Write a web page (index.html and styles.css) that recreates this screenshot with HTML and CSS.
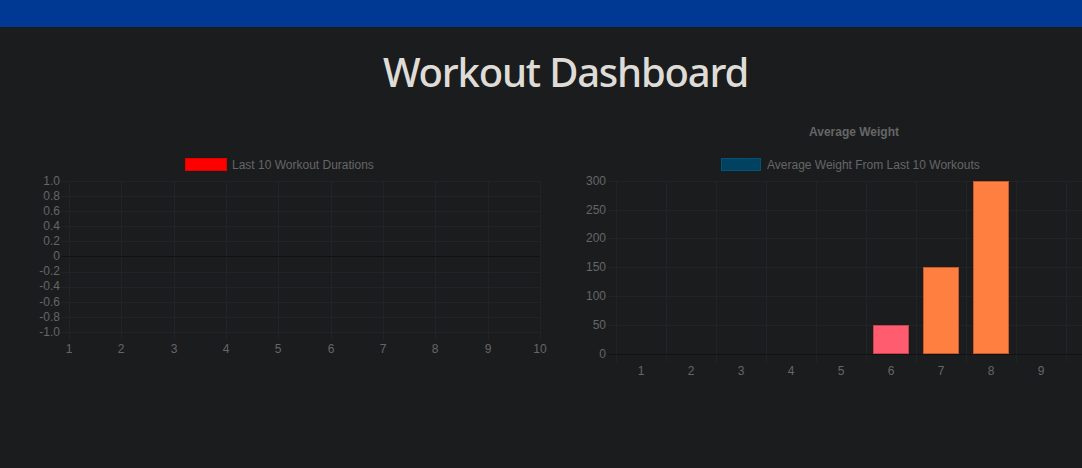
FILE: index.html
```html
<!DOCTYPE html>
<html lang="en">
<head>
<meta charset="utf-8">
<title>Workout Dashboard</title>
<link rel="stylesheet" href="styles.css">
</head>
<body>
<header class="topbar"></header>
<main class="page">
  <h1 class="title">Workout Dashboard</h1>
  <section class="charts">
    <div class="chart">
      <svg class="chart-svg" width="542" height="268" viewBox="0 0 542 268">
        <rect x="177.5" y="46.5" width="41" height="12" fill="#ff0000" stroke="#e00000"/>
        <text class="legend" x="224" y="57">Last 10 Workout Durations</text>
        <g class="grid">
          <line x1="53" y1="69.5" x2="532" y2="69.5"/>
          <line x1="53" y1="84.5" x2="532" y2="84.5"/>
          <line x1="53" y1="99.5" x2="532" y2="99.5"/>
          <line x1="53" y1="114.5" x2="532" y2="114.5"/>
          <line x1="53" y1="129.5" x2="532" y2="129.5"/>
          <line x1="53" y1="160.5" x2="532" y2="160.5"/>
          <line x1="53" y1="175.5" x2="532" y2="175.5"/>
          <line x1="53" y1="190.5" x2="532" y2="190.5"/>
          <line x1="53" y1="205.5" x2="532" y2="205.5"/>
          <line x1="53" y1="220.5" x2="532" y2="220.5"/>
          <line x1="61.5" y1="69" x2="61.5" y2="228"/>
          <line x1="113.5" y1="69" x2="113.5" y2="228"/>
          <line x1="166.5" y1="69" x2="166.5" y2="228"/>
          <line x1="218.5" y1="69" x2="218.5" y2="228"/>
          <line x1="270.5" y1="69" x2="270.5" y2="228"/>
          <line x1="323.5" y1="69" x2="323.5" y2="228"/>
          <line x1="375.5" y1="69" x2="375.5" y2="228"/>
          <line x1="427.5" y1="69" x2="427.5" y2="228"/>
          <line x1="480.5" y1="69" x2="480.5" y2="228"/>
          <line x1="532.5" y1="69" x2="532.5" y2="228"/>
        </g>
        <line class="zero" x1="53" y1="144.5" x2="532" y2="144.5"/>
        <g class="ylabels">
          <text x="52" y="73">1.0</text>
          <text x="52" y="88">0.8</text>
          <text x="52" y="103">0.6</text>
          <text x="52" y="118">0.4</text>
          <text x="52" y="133">0.2</text>
          <text x="52" y="148">0</text>
          <text x="52" y="163">-0.2</text>
          <text x="52" y="178">-0.4</text>
          <text x="52" y="194">-0.6</text>
          <text x="52" y="209">-0.8</text>
          <text x="52" y="224">-1.0</text>
        </g>
        <g class="xlabels">
          <text x="61" y="241">1</text>
          <text x="113" y="241">2</text>
          <text x="166" y="241">3</text>
          <text x="218" y="241">4</text>
          <text x="270" y="241">5</text>
          <text x="323" y="241">6</text>
          <text x="375" y="241">7</text>
          <text x="427" y="241">8</text>
          <text x="480" y="241">9</text>
          <text x="532" y="241">10</text>
        </g>
      </svg>
    </div>
    <div class="chart">
      <svg class="chart-svg" width="542" height="268" viewBox="0 0 542 268">
        <text class="ctitle" x="273" y="24">Average Weight</text>
        <rect x="140.5" y="46.5" width="39" height="12" fill="#00425f" stroke="#005478"/>
        <text class="legend" x="186" y="57">Average Weight From Last 10 Workouts</text>
        <g class="grid">
          <line x1="27" y1="69.5" x2="535" y2="69.5"/>
          <line x1="27" y1="98.5" x2="535" y2="98.5"/>
          <line x1="27" y1="126.5" x2="535" y2="126.5"/>
          <line x1="27" y1="155.5" x2="535" y2="155.5"/>
          <line x1="27" y1="184.5" x2="535" y2="184.5"/>
          <line x1="27" y1="213.5" x2="535" y2="213.5"/>
          <line x1="35.5" y1="69" x2="35.5" y2="250"/>
          <line x1="85.5" y1="69" x2="85.5" y2="250"/>
          <line x1="135.5" y1="69" x2="135.5" y2="250"/>
          <line x1="185.5" y1="69" x2="185.5" y2="250"/>
          <line x1="235.5" y1="69" x2="235.5" y2="250"/>
          <line x1="285.5" y1="69" x2="285.5" y2="250"/>
          <line x1="335.5" y1="69" x2="335.5" y2="250"/>
          <line x1="385.5" y1="69" x2="385.5" y2="250"/>
          <line x1="435.5" y1="69" x2="435.5" y2="250"/>
          <line x1="485.5" y1="69" x2="485.5" y2="250"/>
          <line x1="535.5" y1="69" x2="535.5" y2="250"/>
        </g>
        <rect class="bar-red" x="292.5" y="213.5" width="35" height="28"/>
        <rect class="bar-orange" x="342.5" y="155.5" width="35" height="86"/>
        <rect class="bar-orange" x="392.5" y="69.5" width="35" height="172"/>
        <line class="zero" x1="27" y1="242.5" x2="535" y2="242.5"/>
        <g class="ylabels">
          <text x="25" y="73">300</text>
          <text x="25" y="102">250</text>
          <text x="25" y="130">200</text>
          <text x="25" y="159">150</text>
          <text x="25" y="188">100</text>
          <text x="25" y="217">50</text>
          <text x="25" y="246">0</text>
        </g>
        <g class="xlabels">
          <text x="60" y="263">1</text>
          <text x="110" y="263">2</text>
          <text x="160" y="263">3</text>
          <text x="210" y="263">4</text>
          <text x="260" y="263">5</text>
          <text x="310" y="263">6</text>
          <text x="360" y="263">7</text>
          <text x="410" y="263">8</text>
          <text x="460" y="263">9</text>
        </g>
      </svg>
    </div>
  </section>
</main>
</body>
</html>
```
FILE: styles.css
```css
html, body {
  margin: 0;
  padding: 0;
  background: #1b1c1e;
  overflow: hidden;
  width: 1082px;
  height: 468px;
}

.topbar {
  height: 27px;
  background: #003994;
}

.page {
  width: 1115px;
  padding: 0 8px;
}

.title {
  margin: 21px 0 16px;
  font-family: "Noto Sans", "Open Sans", sans-serif;
  font-size: 40px;
  font-weight: 500;
  line-height: 48px;
  letter-spacing: -1.2px;
  text-align: center;
  color: #dfdcd7;
}

.charts {
  display: flex;
  gap: 31px;
}

.chart {
  flex: 0 0 542px;
  height: 268px;
}

.chart-svg {
  display: block;
  font-family: "Liberation Sans", Arial, sans-serif;
  font-size: 12px;
}

.legend {
  fill: #666;
}

.ctitle {
  fill: #666;
  font-weight: bold;
  text-anchor: middle;
}

.grid line {
  stroke: #222326;
  stroke-width: 1;
}

.zero {
  stroke: #111214;
  stroke-width: 1;
}

.ylabels text {
  fill: #666;
  text-anchor: end;
}

.xlabels text {
  fill: #666;
  text-anchor: middle;
}

.bar-red {
  fill: #ff5c70;
  stroke: #c8414f;
  stroke-width: 1;
}

.bar-orange {
  fill: #ff7f41;
  stroke: #c45a2a;
  stroke-width: 1;
}
```
